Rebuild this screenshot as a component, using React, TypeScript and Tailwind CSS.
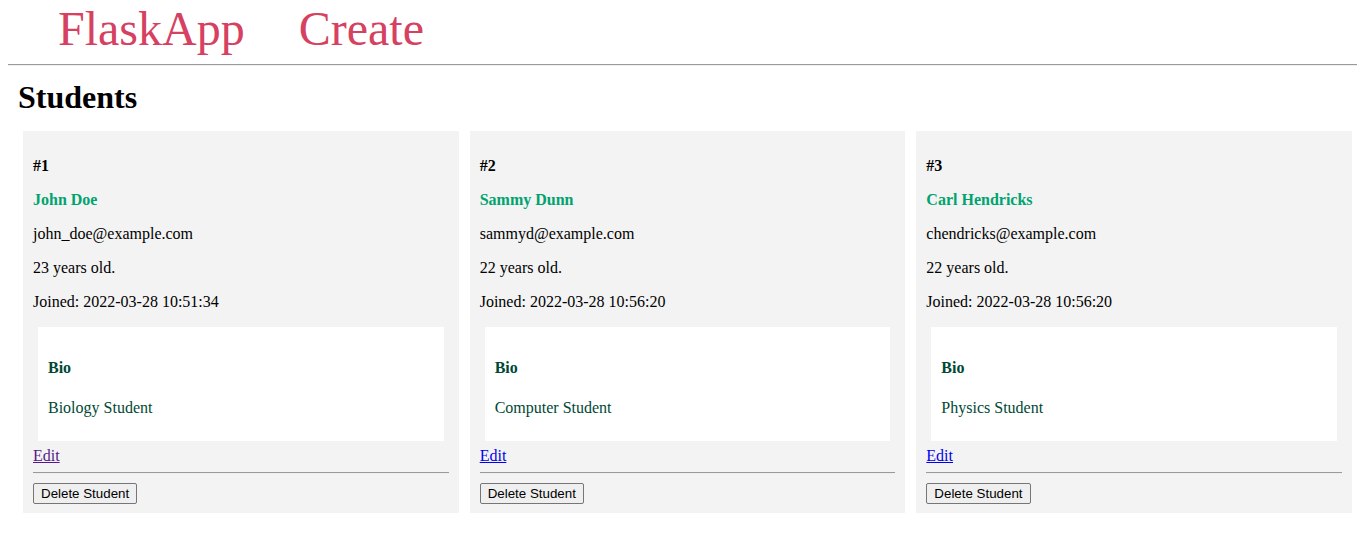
import React from 'react';

interface Student {
  id: number;
  name: string;
  email: string;
  age: number;
  joined: string;
  bio: string;
  visited?: boolean;
}

const students: Student[] = [
  { id: 1, name: 'John Doe', email: 'john_doe@example.com', age: 23, joined: '2022-03-28 10:51:34', bio: 'Biology Student', visited: true },
  { id: 2, name: 'Sammy Dunn', email: 'sammyd@example.com', age: 22, joined: '2022-03-28 10:56:20', bio: 'Computer Student' },
  { id: 3, name: 'Carl Hendricks', email: 'chendricks@example.com', age: 22, joined: '2022-03-28 10:56:20', bio: 'Physics Student' },
];

export default function App() {
  return (
    <div className="w-full bg-white text-black" style={{ fontFamily: '"Liberation Serif", "Times New Roman", serif' }}>
      <nav className="flex pl-[58px] pt-[2px] text-[48px] leading-[53px] text-[#d64161]">
        <a href="#">FlaskApp</a>
        <a href="#" className="ml-[54px]">Create</a>
      </nav>
      <div className="ml-[8px] mr-[6px] mt-[9px] h-[2px] border-t border-b border-t-[#9a9a9a] border-b-[#eeeeee]" />

      <h1 className="ml-[18px] mt-[13px] text-[32px] font-bold leading-[37px]">Students</h1>

      <div className="mt-[15px] flex gap-[11px] pl-[23px] pr-[11px]">
        {students.map((s) => (
          <StudentCard key={s.id} student={s} />
        ))}
      </div>
    </div>
  );
}

function StudentCard({ student }: { student: Student }) {
  return (
    <div className="flex-1 bg-[#f3f3f3] px-[10px] pt-[26px] pb-[9px] text-[16px] leading-[18px]">
      <p className="mb-[16px] font-bold">#{student.id}</p>
      <p className="mb-[16px] font-bold text-[#00a36f]">{student.name}</p>
      <p className="mb-[16px]">{student.email}</p>
      <p className="mb-[16px]">{student.age} years old.</p>
      <p className="mb-[16px]">Joined: {student.joined}</p>

      {/* bio panel */}
      <div className="mx-[5px] bg-white px-[10px] pt-[32px] pb-[24px] text-[#004835]">
        <p className="font-bold">Bio</p>
        <p className="mt-[22px]">{student.bio}</p>
      </div>

      <div className="mt-[6px]">
        <a href="#" className={student.visited ? 'text-[#551a8b] underline' : 'text-[#0000ee] underline'}>
          Edit
        </a>
      </div>
      <div className="mt-[7px] h-[2px] border-t border-b border-t-[#9a9a9a] border-b-[#eeeeee]" />
      <button
        className="mt-[9px] block h-[21px] rounded-[2px] border border-[#767676] bg-[#efefef] px-[7px] text-[13.33px] leading-[17px] text-black"
        style={{ fontFamily: '"Liberation Sans", Arial, sans-serif' }}
      >
        Delete Student
      </button>
    </div>
  );
}
